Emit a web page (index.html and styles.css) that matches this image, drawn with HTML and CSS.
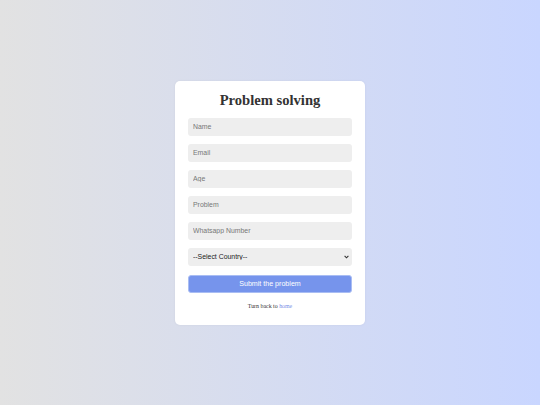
FILE: index.html
```html
<!DOCTYPE html>
<html>
<head>
<meta charset="utf-8">
<link rel="stylesheet" href="styles.css">
</head>
<body>
<div class="page">
  <form class="card">
    <h1 class="title">Problem solving</h1>
    <input class="field" type="text" placeholder="Name">
    <input class="field" type="text" placeholder="Email">
    <input class="field" type="text" placeholder="Age">
    <input class="field" type="text" placeholder="Problem">
    <input class="field" type="text" placeholder="Whatsapp Number">
    <div class="select-wrap">
      <select class="field select">
        <option>--Select Country--</option>
      </select>
      <svg class="chev" width="5" height="4" viewBox="0 0 5 4"><path d="M0.6 0.8 L2.5 2.8 L4.4 0.8" fill="none" stroke="#333" stroke-width="1.1"/></svg>
    </div>
    <button class="submit" type="button">Submit the problem</button>
    <p class="back">Turn back to <a class="link" href="#">home</a></p>
  </form>
</div>
</body>
</html>
```

FILE: styles.css
```css
html, body {
  margin: 0;
  padding: 0;
  height: 100%;
}
body {
  background: linear-gradient(to right, #e2e2e2, #c9d6ff);
  font-family: "Liberation Serif", serif;
}
.page {
  height: 100%;
  display: flex;
  align-items: center;
  justify-content: center;
}
.card {
  width: 164px;
  background: #fff;
  border-radius: 5px;
  padding: 9px 13px 14px;
  display: flex;
  flex-direction: column;
  gap: 8px;
  box-sizing: content-box;
  box-shadow: 0 0 3px rgba(0,0,0,0.05);
}
.title {
  margin: 0;
  font-size: 14.6px;
  line-height: 20px;
  text-align: center;
  color: #333;
  font-weight: bold;
}
.field {
  display: block;
  height: 18px;
  border: none;
  border-radius: 3px;
  background: #eee;
  padding: 0 5px;
  font-family: "Liberation Sans", Arial, sans-serif;
  font-size: 6.9px;
  color: #222;
  outline: none;
  box-sizing: border-box;
  width: 100%;
  margin: 0;
}
.field::placeholder {
  color: #777;
}
.select-wrap {
  position: relative;
}
.select {
  appearance: none;
  -webkit-appearance: none;
  padding: 0 10px 0 5px;
}
.chev {
  position: absolute;
  right: 3px;
  top: 7px;
  pointer-events: none;
}
.submit {
  margin-top: 1px;
  height: 18px;
  border: 1px solid #a9bdf3;
  border-radius: 3px;
  background: #7694ec;
  color: #fff;
  font-family: "Liberation Sans", Arial, sans-serif;
  font-size: 7.1px;
  padding: 0;
}
.back {
  margin: 0;
  text-align: center;
  font-size: 5.9px;
  line-height: 10px;
  color: #333;
}
.link {
  color: #7a8fe6;
  text-decoration: none;
}
```
